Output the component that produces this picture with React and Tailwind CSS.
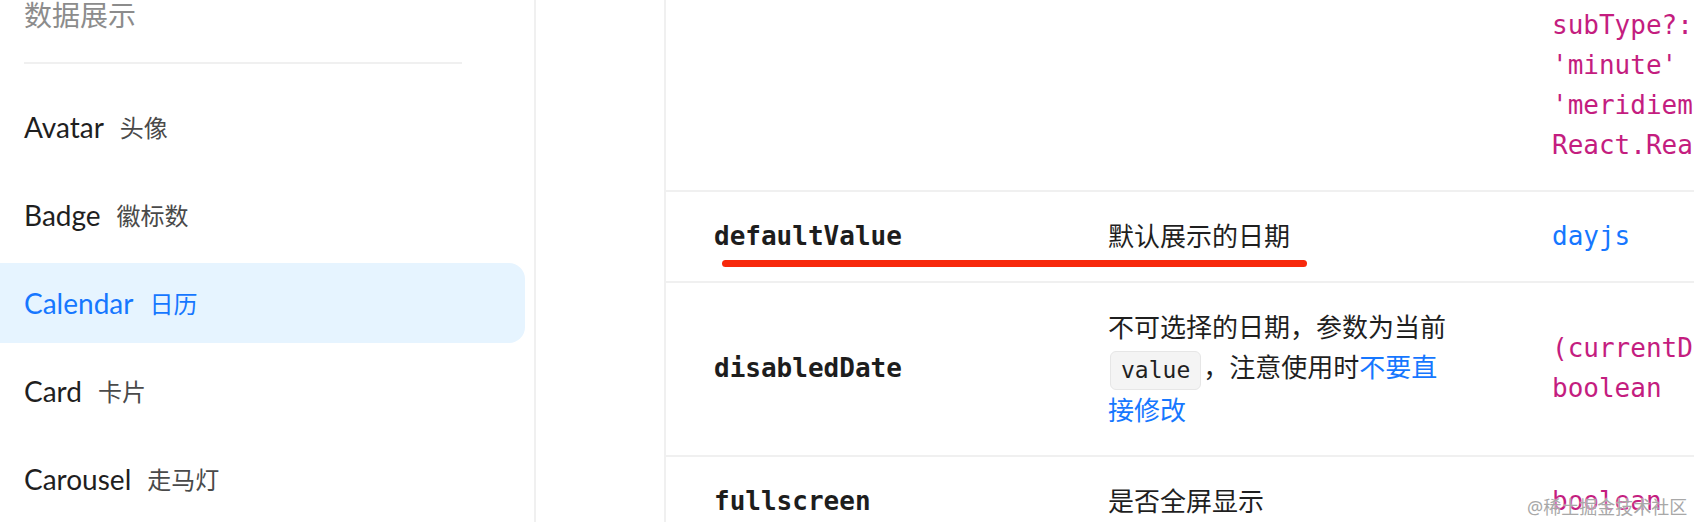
import React from 'react';

const menuItems = [
  { en: 'Avatar', zh: '头像' },
  { en: 'Badge', zh: '徽标数' },
  { en: 'Calendar', zh: '日历', active: true },
  { en: 'Card', zh: '卡片' },
  { en: 'Carousel', zh: '走马灯' },
];

const Sidebar = () => (
  <aside className="w-[536px] shrink-0 border-r-2 border-[#f0f0f0] font-['Lato','Noto_Sans_CJK_SC',sans-serif]">
    <div className="pl-[24px] h-[30px] leading-[30px] text-[28px] text-[#8c8c8c]">数据展示</div>
    <div className="ml-[24px] mt-[32px] w-[438px] h-[2px] bg-[#f0f0f0]" />
    <ul className="mt-[23px] flex flex-col gap-[8px]">
      {menuItems.map(item => (
        <li
          key={item.en}
          className={
            item.active
              ? 'h-[80px] w-[525px] flex items-center pl-[24px] rounded-r-[16px] bg-[#e6f4ff] text-[#1677ff]'
              : 'h-[80px] w-[525px] flex items-center pl-[24px] text-[#1f1f1f]'
          }
        >
          <span className="text-[28px]">{item.en}</span>
          <span
            className={
              item.active
                ? "ml-[16px] text-[24px] font-['Noto_Sans_CJK_SC',sans-serif] text-[#1677ff]"
                : "ml-[16px] text-[24px] font-['Noto_Sans_CJK_SC',sans-serif] text-[#4a4a4a]"
            }
          >
            {item.zh}
          </span>
        </li>
      ))}
    </ul>
  </aside>
);

const Code = ({ children }) => (
  <span className="inline-block mx-[2px] px-[10px] h-[39px] leading-[37px] align-middle rounded-[6px] border border-[#e6e6e6] bg-[#f4f4f4] font-['DejaVu_Sans_Mono',monospace] text-[23px] text-[#1f1f1f]">
    {children}
  </span>
);

const Row = ({ name, desc, type, className }) => (
  <div className={`grid grid-cols-[394px_444px_448px] border-b-2 border-[#f0f0f0] ${className}`}>
    <div className="pl-[48px] flex items-center font-['DejaVu_Sans_Mono',monospace] font-bold text-[26px] text-[#1d1d1d]">
      {name}
    </div>
    <div className="pl-[48px] pr-[50px] flex items-center font-['Noto_Sans','Noto_Sans_CJK_SC',sans-serif] text-[26px] text-[#1f1f1f]">
      <div>{desc}</div>
    </div>
    <div className="pl-[48px] flex items-center font-['DejaVu_Sans_Mono',monospace] text-[26px]">
      <div>{type}</div>
    </div>
  </div>
);

export default function App() {
  return (
    <div className="relative w-[1694px] h-[522px] overflow-hidden bg-white flex leading-[40px]">
      <Sidebar />

      {/* API table */}
      <main className="ml-[128px] border-l-2 border-[#f0f0f0] w-[1288px] shrink-0">
        <Row
          className="h-[192px] pt-[5px] pb-[25px]"
          name=""
          desc=""
          type={
            <div className="text-[#c41d7f] whitespace-pre">
              <div>subType?: 'hour' |</div>
              <div>'minute' | 'second' |</div>
              <div>'meridiem' }) =&gt;</div>
              <div>React.ReactNode</div>
            </div>
          }
        />
        <Row
          className="pt-[24px] pb-[25px]"
          name="defaultValue"
          desc="默认展示的日期"
          type={<span className="text-[#1677ff]">dayjs</span>}
        />
        <Row
          className="pt-[24px] pb-[25px]"
          name="disabledDate"
          desc={
            <>
              不可选择的日期，参数为当前<Code>value</Code>，注意使用时
              <span className="text-[#1677ff]">不要直接修改</span>
            </>
          }
          type={
            <div className="text-[#c41d7f] whitespace-pre">
              <div>(currentDate: Dayjs) =&gt;</div>
              <div>boolean</div>
            </div>
          }
        />
        <Row
          className="pt-[24px] pb-[25px]"
          name="fullscreen"
          desc="是否全屏显示"
          type={<span className="text-[#c41d7f]">boolean</span>}
        />
      </main>

      {/* annotation underline */}
      <div className="absolute left-[722px] top-[260px] w-[585px] h-[7px] rounded-full bg-[#f7290c]" />

      {/* watermark */}
      <div className="absolute left-[1527px] top-[495px] whitespace-nowrap leading-[24px] text-[18px] text-[#a8a8a8] font-['Noto_Sans','Noto_Sans_CJK_SC',sans-serif] [text-shadow:0_0_2px_#fff]">
        @稀土掘金技术社区
      </div>
    </div>
  );
}
